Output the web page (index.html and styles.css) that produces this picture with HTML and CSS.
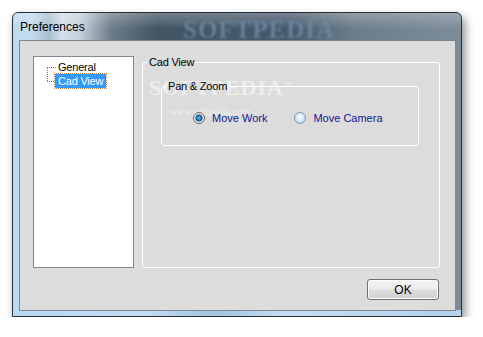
FILE: index.html
```html
<!DOCTYPE html>
<html lang="en">
<head>
    <meta charset="UTF-8">
    <title>Preferences</title>
    <link rel="stylesheet" href="styles.css">
</head>
<body>
    <div class="window">
        <div class="titlebar">
            <span class="title">Preferences</span>
            <span class="mark">SOFTPEDIA</span>
        </div>

        <div class="client">
            <div class="panes">
                <!-- tree on the left -->
                <div class="tree">
                    <ul class="tree-list">
                        <li class="tree-item"><span>General</span></li>
                        <li class="tree-item"><span class="selected">Cad View</span></li>
                    </ul>
                </div>

                <!-- settings on the right -->
                <fieldset class="group outer">
                    <legend>Cad View</legend>
                    <span class="wm">SOFTPEDIA<sup>™</sup></span>
                    <span class="wm-url">www.softpedia.com</span>
                    <fieldset class="group inner">
                        <legend>Pan &amp; Zoom</legend>
                        <div class="radios">
                            <label class="radio"><span class="dot checked"></span>Move Work</label>
                            <label class="radio"><span class="dot"></span>Move Camera</label>
                        </div>
                    </fieldset>
                </fieldset>
            </div>

            <div class="footer">
                <button class="btn">OK</button>
            </div>
        </div>
    </div>
</body>
</html>
```

FILE: styles.css
```css
/* Preferences dialog - Vista style */
body {
    margin: 0;
    background: #ffffff;
    font-family: "Liberation Sans", Arial, sans-serif;
    font-size: 11px;
    color: #000;
}

/* window frame */
.window {
    margin: 12px 0 0 12px;
    width: 437px;
    height: 298px;
    border: 1px solid #2a2f33;
    border-radius: 6px 6px 0 0;
    padding: 0 5px 5px 6px;
    background:
        linear-gradient(90deg, #b9d8f3 0%, #c2ddf3 30%, #9fc3df 45%, #c4ddf2 60%, #b3d2ec 100%) bottom / 100% 6px no-repeat,
        linear-gradient(90deg, #bcd9f2 0%, #c4dcef 4%, #a9bfcd 8%, #d3e0ea 11%, #c3d0da 15%, #6c7c88 22%, #415565 32%, #45596a 62%, #6c7d8a 76%, #7c8c98 100%);
    box-shadow: 3px 5px 10px rgba(0, 0, 0, 0.45);
    display: flex;
    flex-direction: column;
}

.titlebar {
    height: 27px;
    display: flex;
    align-items: center;
    position: relative;
    background: linear-gradient(180deg, rgba(255,255,255,0.25), rgba(255,255,255,0) 60%);
    margin: 0 -5px 0 -6px;
    padding-left: 7px;
    border-radius: 5px 5px 0 0;
}

.title {
    font-size: 12px;
    color: #000;
    position: relative;
    z-index: 1;
}

.mark {
    position: absolute;
    left: 170px;
    top: 3px;
    font-family: "Liberation Serif", serif;
    font-weight: bold;
    font-size: 25px;
    letter-spacing: 1px;
    color: #6f8ba4;
    filter: blur(1px);
    opacity: 0.8;
}

.client {
    flex: 1;
    background: #dcdcdc;
    border: 1px solid #7c8792;
    display: flex;
    flex-direction: column;
    padding: 15px 15px 10px 13px;
}

.panes {
    flex: 1;
    display: flex;
    gap: 8px;
}

/* tree */
.tree {
    width: 99px;
    background: #ffffff;
    border: 1px solid #828790;
    padding-top: 3px;
}

.tree-list {
    list-style: none;
    margin: 0 0 0 13px;
    padding: 0;
    position: relative;
}

.tree-list::before {
    content: "";
    position: absolute;
    left: 0;
    top: 7px;
    height: 14px;
    border-left: 1px dotted #808080;
}

.tree-item {
    height: 14px;
    display: flex;
    align-items: center;
    padding-left: 9px;
    position: relative;
    line-height: 14px;
}

.tree-item::before {
    content: "";
    position: absolute;
    left: 0;
    top: 7px;
    width: 9px;
    border-top: 1px dotted #808080;
}

.tree-item span {
    padding: 0 2px;
    font-size: 11px;
    letter-spacing: -0.2px;
}

.tree-item .selected {
    background: #3399ff;
    color: #fff;
    outline: 1px dotted #c08040;
    margin-left: -1px;
    padding: 0 3px;
}

/* group boxes */
.group {
    margin: 0;
    border: 1px solid #ffffff;
    border-radius: 3px;
    min-width: 0;
}

.group legend {
    padding: 0 1px;
    font-size: 11px;
    letter-spacing: -0.2px;
}

.outer {
    flex: 1;
    padding: 0;
    position: relative;
}

.outer > legend {
    margin-left: 5px;
}

.inner {
    margin: 12px 20px 0 18px;
    padding: 0 0 21px;
    position: relative;
    z-index: 1;
}

.inner > legend {
    margin-left: 5px;
}

.radios {
    display: flex;
    gap: 27px;
    padding: 20px 0 0 31px;
}

.radio {
    display: flex;
    align-items: center;
    gap: 7px;
    font-size: 11px;
    color: #15158f;
}

.dot {
    width: 12px;
    height: 12px;
    border-radius: 50%;
    border: 1px solid #8a98a8;
    background: radial-gradient(circle at 50% 40%, #ffffff 0%, #d4ecfb 45%, #9ccbee 100%);
    box-sizing: border-box;
}

.dot.checked {
    border-color: #6a6a6a;
    background: radial-gradient(circle at 50% 50%, #5ac2ff 0%, #1b6fa8 35%, #0e3f68 45%, #e4e4e4 55%, #f4f4f4 100%);
}

/* softpedia watermark */
.wm {
    position: absolute;
    left: 6px;
    top: 7px;
    font-family: "Liberation Serif", serif;
    font-size: 22px;
    font-weight: bold;
    letter-spacing: 1px;
    color: rgba(255, 255, 255, 0.5);
}

.wm sup {
    font-size: 8px;
}

.wm-url {
    position: absolute;
    left: 27px;
    top: 38px;
    font-family: "Liberation Serif", serif;
    font-size: 10px;
    color: rgba(255, 255, 255, 0.55);
}

/* footer */
.footer {
    display: flex;
    justify-content: flex-end;
    padding: 11px 1px 0 0;
}

.btn {
    width: 72px;
    height: 21px;
    border: 1px solid #707070;
    border-radius: 3px;
    background: linear-gradient(180deg, #f3f3f3 0%, #ebebeb 48%, #dddddd 52%, #cfcfcf 100%);
    box-shadow: inset 0 0 0 1px #fcfcfc;
    font-family: "Liberation Sans", Arial, sans-serif;
    font-size: 12px;
    color: #000;
    padding: 0;
}
```
